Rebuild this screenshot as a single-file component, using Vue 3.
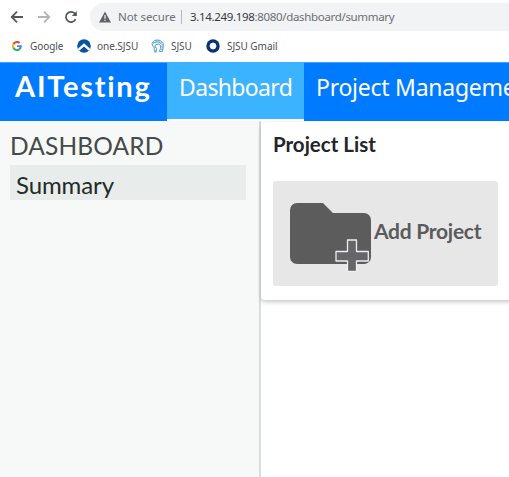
<script setup>
const bookmarks = [
  { id: 'google', label: 'Google' },
  { id: 'one', label: 'one.SJSU' },
  { id: 'sjsu', label: 'SJSU' },
  { id: 'gmail', label: 'SJSU Gmail' },
]
</script>

<template>
  <div class="window">
    <div class="toolbar">
      <svg class="nav-icon" viewBox="0 0 16 16"><path d="M14 8H3M8 2.7 2.7 8 8 13.3" /></svg>
      <svg class="nav-icon faded" viewBox="0 0 16 16"><path d="M2 8h11M8 2.7 13.3 8 8 13.3" /></svg>
      <svg class="nav-icon" viewBox="0 0 16 16">
        <path d="M12.6 10.2A5.1 5.1 0 1 1 11.7 4.4L13 5.8" />
        <path class="solid" d="M13.8 2v5H8.8z" />
      </svg>
      <div class="address">
        <svg class="warning" viewBox="0 0 12 12">
          <path d="M6 .5 12 11.5H0z" fill="#5f6368" />
          <path d="M6 4v3.8M6 8.800v1.300" stroke="#f1f3f4" stroke-width="1.2" />
        </svg>
        <span class="insecure">Not secure</span>
        <span class="separator"></span>
        <span class="url"><b>3.14.249.198</b>:8080/dashboard/summary</span>
      </div>
    </div>

    <div class="bookmarks">
      <div v-for="b in bookmarks" :key="b.id" class="bookmark" :class="b.id">
        <svg v-if="b.id === 'google'" class="favicon small" viewBox="0 0 48 48">
          <path fill="#ea4335" d="M24 9.500c3.500 0 6.700 1.200 9.200 3.600l6.900-6.900C35.900 2.400 30.500 0 24 0 14.600 0 6.500 5.400 2.600 13.200l8 6.200C12.400 13.700 17.700 9.500 24 9.500z" />
          <path fill="#4285f4" d="M47 24.600c0-1.600-.2-3.100-.4-4.600H24v9h12.900c-.6 3-2.300 5.500-4.800 7.200l7.700 6C44.400 38 47 31.800 47 24.600z" />
          <path fill="#fbbc05" d="M10.500 28.600a14.500 14.500 0 0 1 0-9.200l-8-6.200a24 24 0 0 0 0 21.600z" />
          <path fill="#34a853" d="M24 48c6.500 0 11.900-2.100 15.900-5.800l-7.700-6c-2.200 1.400-4.900 2.300-8.200 2.300-6.300 0-11.600-4.200-13.500-9.900l-8 6.200C6.500 42.600 14.600 48 24 48z" />
        </svg>
        <svg v-else-if="b.id === 'one'" class="favicon" viewBox="0 0 14 14">
          <circle cx="7" cy="7" r="6.800" fill="#08539f" />
          <path d="M.8 9.700 7 4.200l6.200 5.500-1.400 2L7 7.500l-4.800 4.200z" fill="#fff" />
        </svg>
        <svg v-else-if="b.id === 'sjsu'" class="favicon" viewBox="0 0 14 14" fill="none" stroke="#5ba3cc">
          <path d="M1 4.500C2 1.500 5 .5 8 1.200c3.500.8 4.800 3.200 4.300 6.200l-.8 5.100H8.300l1.200-3.200V6.500L7.600 5 5 5.600 3.800 8l2 1.200-.6 3.200-2-.8V8.300L2 7.600z" fill="#e3f3f9" />
          <path d="M2 4.400C4 2.600 9 2.400 10.500 5.200M5 .8l.7 2M8 .9v2M11 2.600 9.500 4M12.500 5.500l-1.800.4M12.300 8l-2-.2M12 10.300H9.500M3 12.800l3 .2" />
        </svg>
        <svg v-else class="favicon" viewBox="0 0 14 14">
          <circle cx="7" cy="7" r="6.700" fill="#0b2f78" />
          <path d="m7 3.500 2.500 1 1 2.500-1 2.500-2.500 1-2.500-1-1-2.500 1-2.500z" fill="#fff" />
        </svg>
        <span>{{ b.label }}</span>
      </div>
    </div>

    <nav class="navbar">
      <div class="brand">AITesting</div>
      <div class="tab active"><span>Dashboard</span></div>
      <div class="tab"><span>Project Management</span></div>
    </nav>

    <div class="body">
      <aside class="sidebar">
        <div class="heading">DASHBOARD</div>
        <div class="item"><span>Summary</span></div>
      </aside>
      <main class="content">
        <section class="card">
          <h2>Project List</h2>
          <div class="add">
            <svg class="folder" viewBox="0 0 82 72">
              <path d="M7 0h26l10 10h31a7 7 0 0 1 7 7v37a7 7 0 0 1-7 7H7a7 7 0 0 1-7-7V7a7 7 0 0 1 7-7z" fill="#5c5c5c" />
              <path d="M57.500 37h9v11.500h11.800v9.500H66.500v10.500h-9V58H46v-9.500h11.500z" fill="#666568" stroke="#f0edf2" stroke-width="1.300" stroke-linejoin="round" />
            </svg>
            <span>Add Project</span>
          </div>
        </section>
      </main>
    </div>
  </div>
</template>

<style>
body { margin: 0; overflow: hidden; background: #fff; }
</style>

<style scoped>
.window { width: 509px; height: 477px; overflow: hidden; display: flex; flex-direction: column; background: #fff; white-space: nowrap; }
.toolbar { height: 34px; flex: none; box-sizing: border-box; padding: 3px 0 3px 9px; display: flex; align-items: center; }
.nav-icon { width: 16px; height: 16px; flex: none; margin-right: 11px; fill: none; stroke: #55585c; stroke-width: 1.8; }
.nav-icon.faded { stroke: #b2b4b7; }
.nav-icon .solid { fill: #55585c; stroke: none; }
.address { flex: 1; height: 28px; border-radius: 14px 0 0 14px; background: #f1f3f4; display: flex; align-items: center; padding-left: 9px; font: 12px/28px "Noto Sans", sans-serif; color: #6b6f73; }
.warning { width: 12px; height: 12px; flex: none; }
.insecure { margin-left: 7px; width: 58px; font-size: 11.5px; letter-spacing: -0.09px; }
.separator { width: 1px; height: 14px; margin: 0 8px 0 5px; background: #b6b8bb; }
.url { font-size: 11.5px; letter-spacing: -0.33px; }
.url b { font-weight: 400; color: #35383c; }
.bookmarks { height: 28px; flex: none; box-sizing: border-box; padding-bottom: 4px; display: flex; align-items: center; font: 10px/14px "Noto Sans", sans-serif; color: #4d5054; }
.bookmark { display: flex; align-items: center; }
.bookmark span { letter-spacing: -0.05px; }
.favicon { width: 14px; height: 14px; margin-right: 6px; flex: none; }
.favicon.small { width: 10px; height: 10px; margin-right: 8px; }
.google { width: 65px; padding-left: 12px; }
.one { width: 74px; }
.sjsu { width: 55px; }
.gmail .favicon { margin-right: 7px; }
.navbar { height: 59px; flex: none; display: flex; background: #007bff; color: #fff; box-shadow: inset 0 1px #40a4ff; }
.brand { width: 152px; flex: none; padding-left: 15px; font: 700 29px/48px Lato, sans-serif; letter-spacing: 1.75px; }
.tab { box-sizing: border-box; padding: 0 12px; height: 59px; font: 23px/51px "Noto Sans", sans-serif; letter-spacing: -0.25px; flex: none; }
.tab.active { width: 137px; background: #3cb3ff; border-bottom: 2px solid #fff; letter-spacing: -0.65px; }
.body { flex: 1; min-height: 0; display: flex; }
.sidebar { width: 261px; box-sizing: border-box; flex: none; padding: 8px 13px 0 10px; background: #f7f9f8; border-right: 2px solid #dcdddd; font-family: Lato, sans-serif; }
.heading { height: 36px; font-size: 24.5px; line-height: 34px; color: #464a49; letter-spacing: 0.15px; }
.item { height: 35px; padding-left: 6px; font-size: 24px; line-height: 40px; color: #222b27; background: #e8ecea; letter-spacing: -0.1px; }
.content { flex: 1; min-width: 0; padding-top: 1px; }
.card { width: 260px; height: 178px; box-sizing: border-box; padding: 5px 12px; background: #fff; border-radius: 4px; box-shadow: 0 2px 4px #00000038; }
h2 { margin: 0; height: 54px; font: 700 20.5px/35px Lato, sans-serif; color: #222529; }
.add { width: 225px; height: 105px; box-sizing: border-box; border-radius: 3px; background: #e7e7e7; padding: 22px 0 0 17px; display: flex; align-items: flex-start; }
.folder { width: 82px; height: 72px; flex: none; }
.add span { margin-left: 2px; font: 700 21px/56px Lato, sans-serif; letter-spacing: -0.27px; color: #5b5b5b; }
</style>
